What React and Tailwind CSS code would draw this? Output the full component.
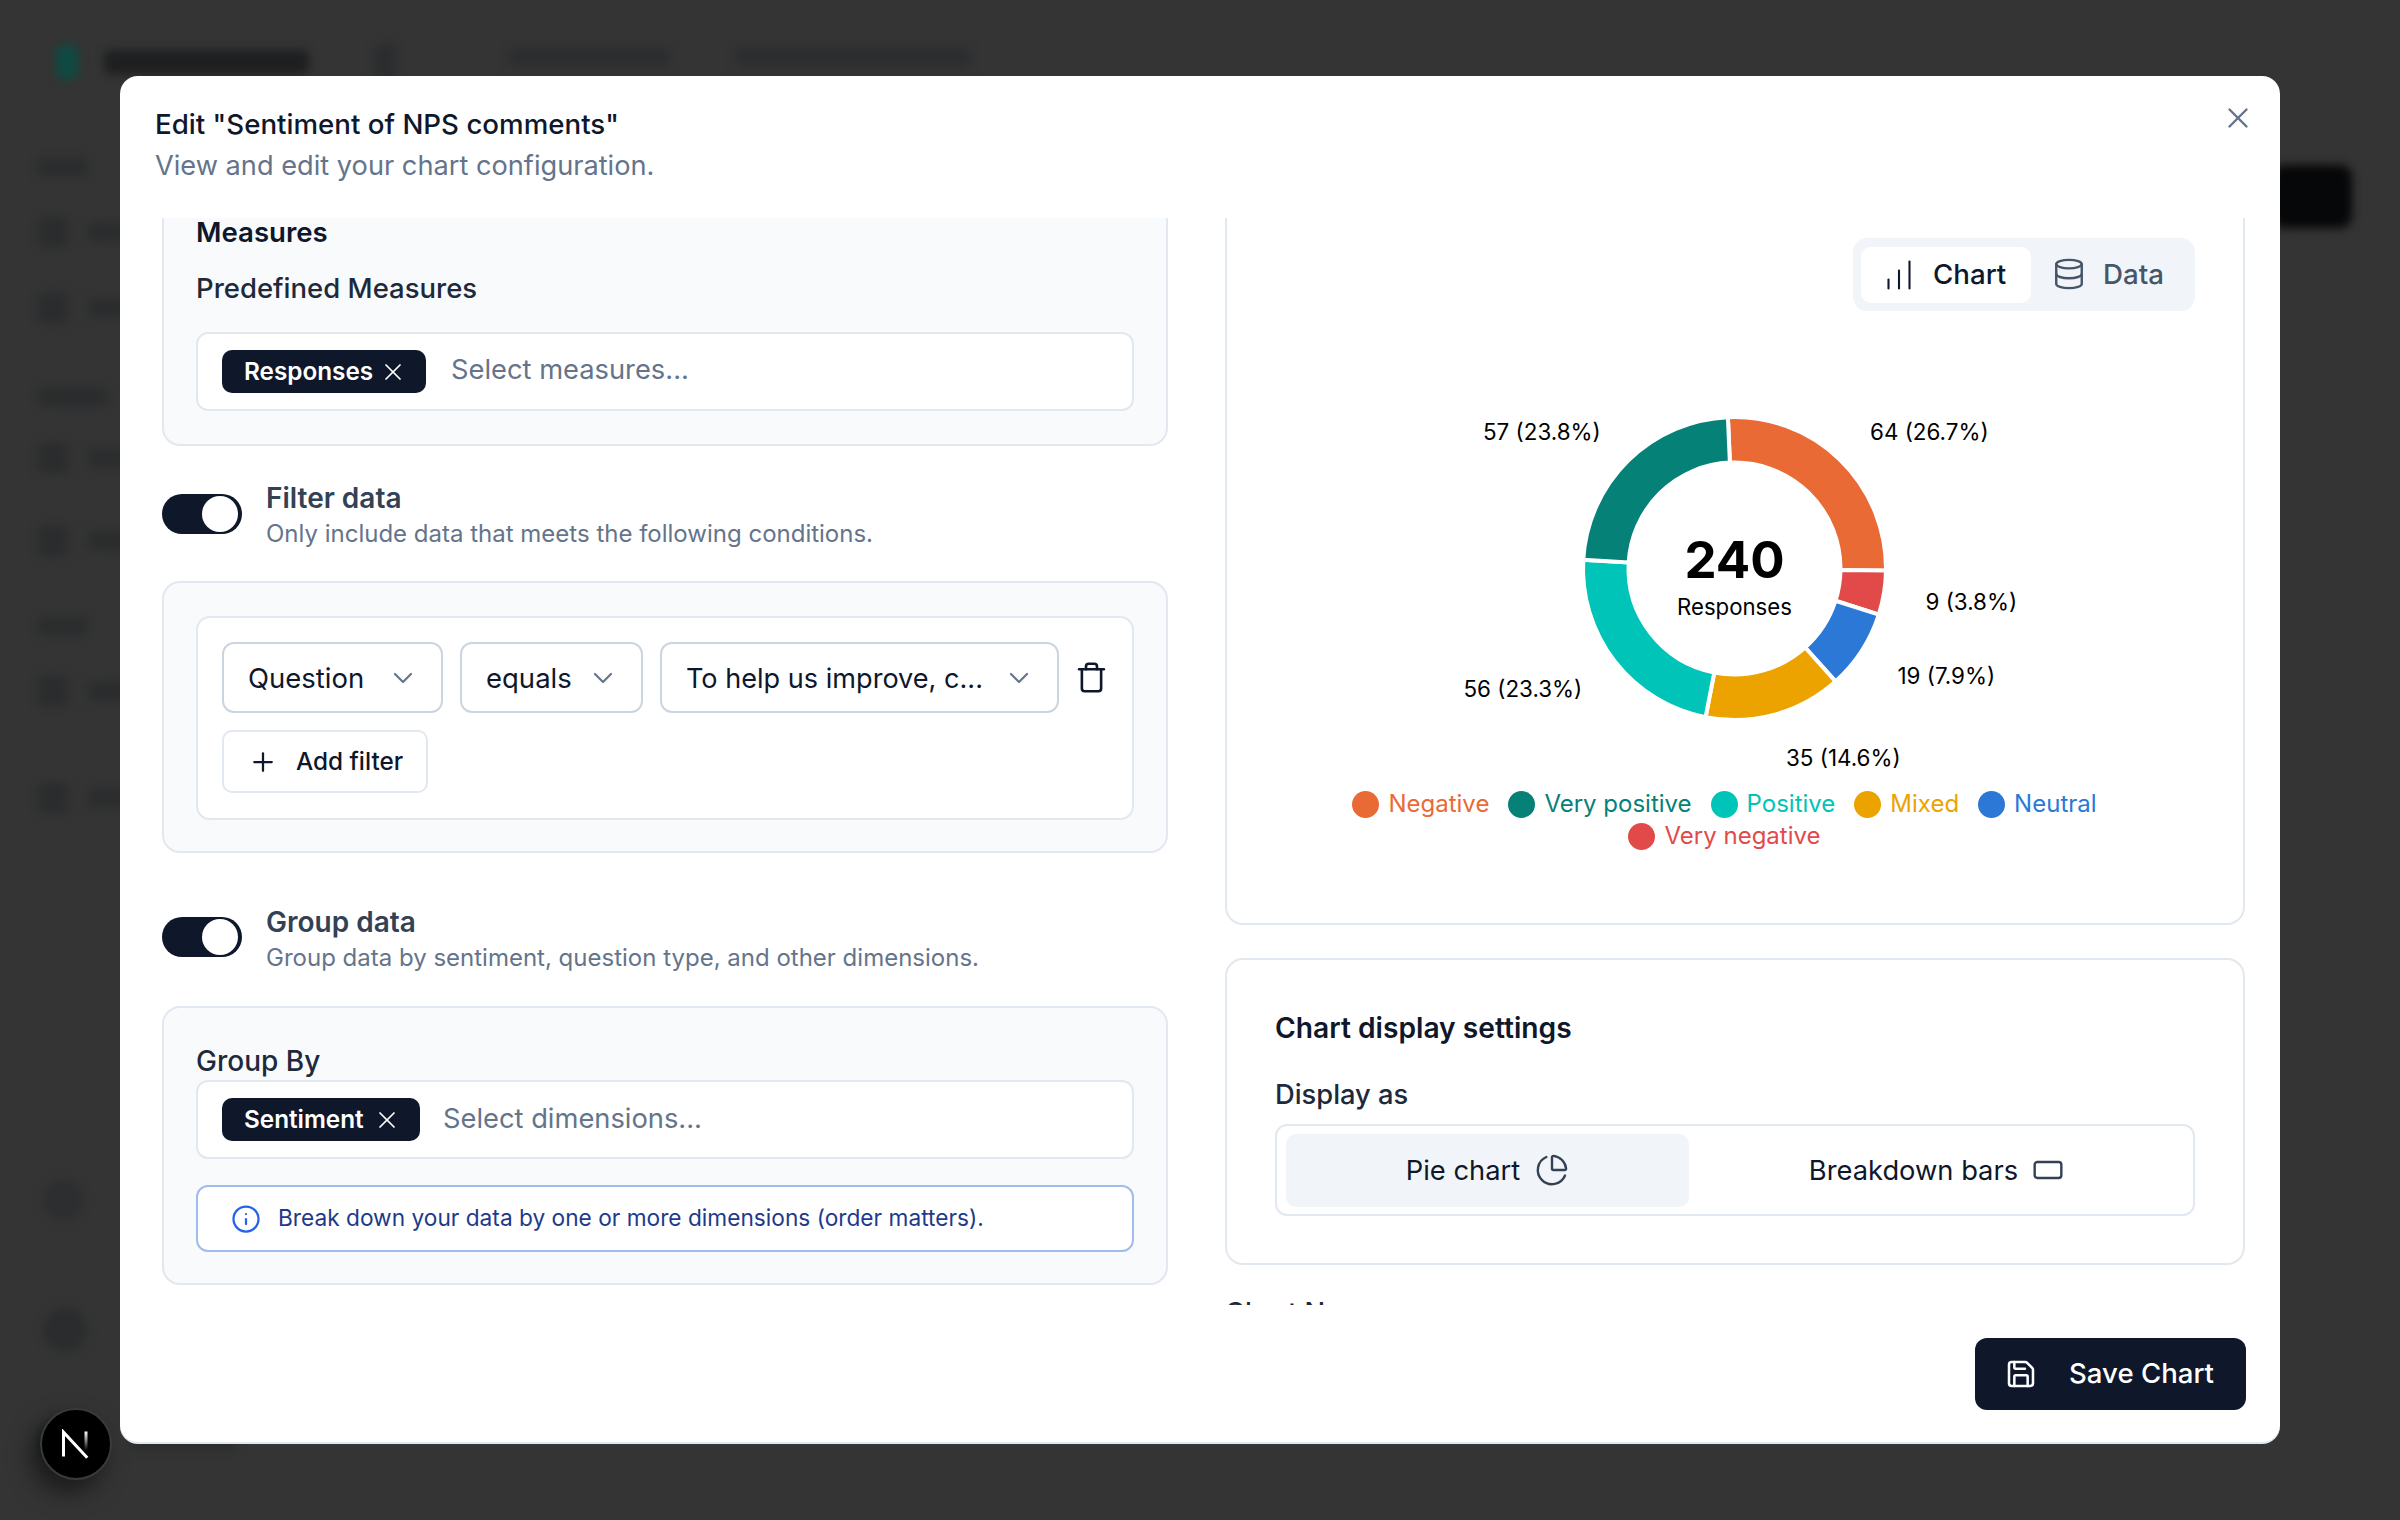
import React from "react";
import { X, ChevronDown, Trash, Plus, Info, ChartNoAxesColumnIncreasing, Database, ChartPie, RectangleHorizontal, Save } from "lucide-react";

const C = 1734.5 - 1414, CY = 568.5 - 410;
const pt = (r, a) => {
  const t = ((a - 90) * Math.PI) / 180;
  return [C + r * Math.cos(t), CY + r * Math.sin(t)];
};
const arc = (a0, a1, R = 151.5, r = 106) => {
  const [x0, y0] = pt(R, a0), [x1, y1] = pt(R, a1), [x2, y2] = pt(r, a1), [x3, y3] = pt(r, a0);
  const l = a1 - a0 > 180 ? 1 : 0;
  return `M${x0} ${y0}A${R} ${R} 0 ${l} 1 ${x1} ${y1}L${x2} ${y2}A${r} ${r} 0 ${l} 0 ${x3} ${y3}Z`;
};
const slices = [
  [-2.5, 90.8, "#ea6a36"],
  [90.8, 107.7, "#e24a4a"],
  [107.7, 138.2, "#2b78d6"],
  [138.2, 191, "#eca300"],
  [191, 273.3, "#00c4b8"],
  [273.3, 357.5, "#068178"],
];
const labels = [
  ["64 (26.7%)", 1870, 432],
  ["57 (23.8%)", 1483, 432],
  ["9 (3.8%)", 1925.5, 601.5],
  ["19 (7.9%)", 1897.5, 675.5],
  ["35 (14.6%)", 1786, 758],
  ["56 (23.3%)", 1463.5, 689],
];

function Toggle() {
  return (
    <div className="w-[80px] h-[40px] rounded-full bg-[#0f172a] flex items-center justify-end pr-[4px] shrink-0">
      <div className="w-[36px] h-[36px] rounded-full bg-white" />
    </div>
  );
}

function Chip({ label, w }) {
  return (
    <div className={`${w} h-[43px] rounded-[10px] bg-[#0f172a] text-white text-[24.3px] font-semibold flex items-center justify-between pl-[22px] pr-[19.5px] shrink-0`}>
      <span>{label}</span>
      <X className="w-[28px] h-[28px]" strokeWidth={1.5} />
    </div>
  );
}

function Select({ w, label, size = "text-[27.5px]" }) {
  return (
    <div className={`${w} h-[71px] rounded-[12px] bg-white border-2 border-[#cbd5e1] flex items-center justify-between pl-[24px] pr-[22px] ${size} text-[#0f172a] shrink-0`}>
      <span className="pt-[3px]">{label}</span>
      <ChevronDown className="w-[32px] h-[32px] text-[#64748b]" strokeWidth={1.6} />
    </div>
  );
}

function Legend({ color, label }) {
  return (
    <div className="flex items-center gap-[9px]">
      <span className="w-[27px] h-[27px] rounded-full" style={{ background: color }} />
      <span className="text-[24px] leading-[30px]" style={{ color }}>{label}</span>
    </div>
  );
}

function Background() {
  const rows = [
    ["mt-[13px]", "w-[50px]", ""],
    ["mt-[41px]", "w-[85px]", "icon"],
    ["mt-[46px]", "w-[85px]", "icon"],
    ["mt-[65px]", "w-[70px]", ""],
    ["mt-[37px]", "w-[85px]", "icon"],
    ["mt-[53px]", "w-[85px]", "icon"],
    ["mt-[61px]", "w-[50px]", ""],
    ["mt-[41px]", "w-[85px]", "icon"],
    ["mt-[77px]", "w-[85px]", "icon"],
  ];
  return (
    <div className="h-[1520px] w-[2400px] overflow-hidden blur-[5px]">
      <div className="h-[120px] flex items-center pl-[56px] pr-[48px] pt-[4px]">
        <div className="w-[22px] h-[34px] rounded-[6px] bg-[#0e4a42]" />
        <div className="ml-[26px] w-[205px] h-[24px] rounded-[6px] bg-[#1e1f20]" />
        <div className="ml-[66px] w-[20px] h-[34px] rounded-[4px] bg-[#2a2c2e]" />
        <div className="ml-[114px] w-[160px] h-[18px] rounded-[4px] bg-[#2b2d2f] -mt-[10px]" />
        <div className="ml-[66px] w-[235px] h-[18px] rounded-[4px] bg-[#2b2d2f] -mt-[10px]" />
      </div>
      <div className="flex justify-end pr-[48px] mt-[45px] h-0">
        <div className="w-[80px] h-[63px] rounded-[12px] bg-[#060708]" />
      </div>
      <div className="pl-[38px] -mt-[20px]">
        {rows.map(([mt, w, icon], i) => (
          <div key={i} className={`${mt} flex items-center gap-[20px]`}>
            {icon && <div className="w-[30px] h-[30px] rounded-[6px] bg-[#2a2c2d]" />}
            <div className={`${w} h-[18px] rounded-[4px] bg-[#2a2c2d]`} />
          </div>
        ))}
        <div className="mt-[367px] ml-[5px] w-[40px] h-[40px] rounded-full bg-[#2c2e2f]" />
        <div className="mt-[88px] ml-[5px] w-[44px] h-[44px] rounded-full bg-[#2a2c2d]" />
        <div className="mt-[68px] flex items-center gap-[50px]">
          <div className="w-[44px] h-[44px] rounded-full bg-[#1a2726]" />
          <div className="w-[105px] h-[16px] rounded-[4px] bg-[#2b2d2e]" />
        </div>
      </div>
    </div>
  );
}

export default function App() {
  return (
    <div className="relative w-[2400px] h-[1520px] overflow-hidden bg-[#343434] font-['Inter',sans-serif]">
      <Background />

      <div className="absolute left-[120px] top-[76px] w-[2160px] h-[1368px] bg-white rounded-[18px] border-b-2 border-[#e2e8f0] flex flex-col overflow-hidden">
        <div className="relative h-[142px] shrink-0 pl-[35px] pt-[29px]">
          <div className="text-[27.7px] leading-[38px] font-medium text-[#0f172a]">Edit "Sentiment of NPS comments"</div>
          <div className="text-[27.2px] leading-[38px] mt-[4px] text-[#64748b]">View and edit your chart configuration.</div>
          <X className="absolute right-[25px] top-[25px] w-[34px] h-[34px] text-[#64748b]" strokeWidth={1.7} />
        </div>

        <div className="h-[1087px] shrink-0 overflow-hidden grid grid-cols-[1006px_1020px] gap-[57px] pl-[42px]">
          {/* left column */}
          <div className="-mt-[20px] flex flex-col">
            <div className="h-[248px] rounded-[18px] border-2 border-[#e2e8f0] bg-[#f8fafc] px-[32px] pt-[20px] shrink-0">
              <div className="text-[27.6px] leading-[24px] font-semibold text-[#0f172a]">Measures</div>
              <div className="mt-[27px] text-[27.5px] leading-[34px] font-medium text-[#1e293b]">Predefined Measures</div>
              <div className="mt-[27px] h-[79px] rounded-[12px] border-2 border-[#e2e8f0] bg-white flex items-center pl-[24px] gap-[25px]">
                <Chip label="Responses" w="w-[204px]" />
                <span className="text-[27.3px] pb-[2px] text-[#64748b]">Select measures...</span>
              </div>
            </div>

            <div className="mt-[32px] flex gap-[24px] h-[103px] shrink-0">
              <div className="mt-[16px]"><Toggle /></div>
              <div>
                <div className="text-[28px] leading-[40px] font-semibold text-[#334155]">Filter data</div>
                <div className="text-[24px] leading-[30px] pt-[1px] text-[#64748b]">Only include data that meets the following conditions.</div>
              </div>
            </div>

            <div className="h-[272px] rounded-[18px] border-2 border-[#e2e8f0] bg-[#f8fafc] px-[32px] pt-[33px] shrink-0">
              <div className="h-[204px] rounded-[14px] border-2 border-[#e2e8f0] bg-white px-[24px] pt-[24px]">
                <div className="flex items-center gap-[17px]">
                  <Select w="w-[221px]" label="Question" />
                  <Select w="w-[183px]" label="equals" />
                  <Select w="w-[399px]" label="To help us improve, c..." size="text-[27.1px]" />
                  <Trash className="w-[33px] h-[33px] -ml-[1px] text-[#0f172a]" strokeWidth={1.9} />
                </div>
                <div className="mt-[17px] w-[206px] h-[63px] rounded-[10px] border-2 border-[#e2e8f0] flex items-center pl-[24px] gap-[18px] text-[24.3px] font-medium text-[#0f172a]">
                  <Plus className="w-[30px] h-[30px]" strokeWidth={1.8} />
                  <span>Add filter</span>
                </div>
              </div>
            </div>

            <div className="mt-[48px] flex gap-[24px] h-[105px] shrink-0">
              <div className="mt-[16px]"><Toggle /></div>
              <div>
                <div className="text-[28px] leading-[40px] pt-[1px] font-semibold text-[#334155]">Group data</div>
                <div className="text-[24px] leading-[30px] pt-[1px] text-[#64748b]">Group data by sentiment, question type, and other dimensions.</div>
              </div>
            </div>

            <div className="h-[279px] rounded-[18px] border-2 border-[#e2e8f0] bg-[#f8fafc] px-[32px] pt-[34.5px] shrink-0">
              <div className="text-[28px] leading-[36px] pb-[1.5px] font-medium text-[#1e293b]">Group By</div>
              <div className="h-[79px] rounded-[12px] border-2 border-[#e2e8f0] bg-white flex items-center pl-[24px] gap-[23px]">
                <Chip label="Sentiment" w="w-[198px]" />
                <span className="text-[27.3px] text-[#64748b]">Select dimensions...</span>
              </div>
              <div className="mt-[26px] h-[67px] rounded-[12px] border-2 border-[#a0bcee] bg-white flex items-center pl-[33px] gap-[17px] text-[22.7px] text-[#1e3a8a]">
                <Info className="w-[30px] h-[30px] text-[#2563eb]" strokeWidth={1.8} />
                <span>Break down your data by one or more dimensions (order matters).</span>
              </div>
            </div>
          </div>

          {/* right column */}
          <div className="-mt-[20px] flex flex-col pr-0">
            <div className="h-[727px] rounded-[18px] border-2 border-[#e2e8f0] bg-white shrink-0 flex flex-col relative">
              <div className="self-end mr-[48px] mt-[38px] w-[342px] h-[73px] rounded-[14px] bg-[#f1f5f9] flex items-center p-[8px] shrink-0">
                <div className="w-[170px] h-[56px] rounded-[10px] bg-white flex items-center pl-[20px] gap-[16px] text-[27.7px] font-medium text-[#0f172a]">
                  <ChartNoAxesColumnIncreasing className="w-[36px] h-[36px]" strokeWidth={1.4} />
                  <span>Chart</span>
                </div>
                <div className="flex items-center pl-[21px] gap-[17px] text-[27.7px] font-medium text-[#475569]">
                  <Database className="w-[34px] h-[34px]" strokeWidth={1.7} />
                  <span>Data</span>
                </div>
              </div>
              <svg className="mt-[99px] ml-[187px] shrink-0" width="640" height="370" viewBox="0 0 640 370">
                {slices.map(([a, b, c], i) => (
                  <path key={i} d={arc(a, b)} fill={c} stroke="#ffffff" strokeWidth="4" strokeLinejoin="miter" />
                ))}
                <text x={C} y={CY + 9} textAnchor="middle" fontSize="51" fontWeight="700" fill="#000" fontFamily="Inter">240</text>
                <text x={C} y={CY + 46} textAnchor="middle" fontSize="22.2" fill="#000" fontFamily="Inter">Responses</text>
                {labels.map(([t, x, y]) => (
                  <text key={t} x={x - 1414} y={y - 410 + 8} fontSize="22.4" fill="#000" fontFamily="Inter">{t}</text>
                ))}
              </svg>
              <div className="absolute left-0 right-0 top-[589px] flex flex-wrap justify-center gap-x-[19px] gap-y-[2px] pl-[120px] pr-[141px]">
                <Legend color="#ea6a36" label="Negative" />
                <Legend color="#068178" label="Very positive" />
                <Legend color="#00c4b8" label="Positive" />
                <Legend color="#eca300" label="Mixed" />
                <Legend color="#2b78d6" label="Neutral" />
                <Legend color="#e24a4a" label="Very negative" />
              </div>
            </div>

            <div className="mt-[33px] h-[307px] rounded-[18px] border-2 border-[#e2e8f0] bg-white px-[48px] pt-[50px] shrink-0">
              <div className="text-[28.2px] leading-[36px] font-semibold text-[#0f172a]">Chart display settings</div>
              <div className="mt-[31px] text-[27.3px] leading-[36px] font-medium text-[#1e293b]">Display as</div>
              <div className="mt-[11px] h-[92px] rounded-[12px] border-2 border-[#e2e8f0] flex items-center px-[9px] text-[27.3px] text-[#0f172a]">
                <div className="w-[403px] h-[73px] rounded-[10px] bg-[#f1f5f9] flex items-center justify-center gap-[15px]">
                  <span className="pt-[2px]">Pie chart</span>
                  <ChartPie className="w-[34px] h-[34px] text-[#334155]" strokeWidth={1.7} />
                </div>
                <div className="flex-1 flex items-center justify-center gap-[14px]">
                  <span className="pt-[2px]">Breakdown bars</span>
                  <RectangleHorizontal className="w-[32px] h-[32px] text-[#334155]" strokeWidth={1.8} />
                </div>
              </div>
            </div>

            <div className="mt-[30px] text-[27.3px] leading-[36px] font-medium text-[#1e293b]">Chart Name</div>
          </div>
        </div>

        <div className="flex-1 flex justify-end pr-[34px] pt-[33px]">
          <div className="w-[271px] h-[72px] rounded-[12px] bg-[#0f172a] flex items-center pl-[30px] gap-[32px] text-white text-[27.6px] font-medium">
            <Save className="w-[32px] h-[32px]" strokeWidth={1.9} />
            <span>Save Chart</span>
          </div>
        </div>
      </div>

      <div className="absolute left-[40px] top-[1408px] w-[72px] h-[72px] rounded-full bg-black border-2 border-[#3a3a3a] flex items-center justify-center shadow-[-8px_12px_24px_rgba(0,0,0,0.5)]">
        <svg width="30" height="30" viewBox="0 0 24 24" fill="none" stroke="#fff" strokeWidth="2.4">
          <path d="M2 22V2.5L21 23" />
          <path d="M20 2v15" stroke="url(#ng)" />
          <defs>
            <linearGradient id="ng" x1="0" y1="2" x2="0" y2="17" gradientUnits="userSpaceOnUse">
              <stop stopColor="#fff" />
              <stop offset="1" stopColor="#fff" stopOpacity="0" />
            </linearGradient>
          </defs>
        </svg>
      </div>
    </div>
  );
}
